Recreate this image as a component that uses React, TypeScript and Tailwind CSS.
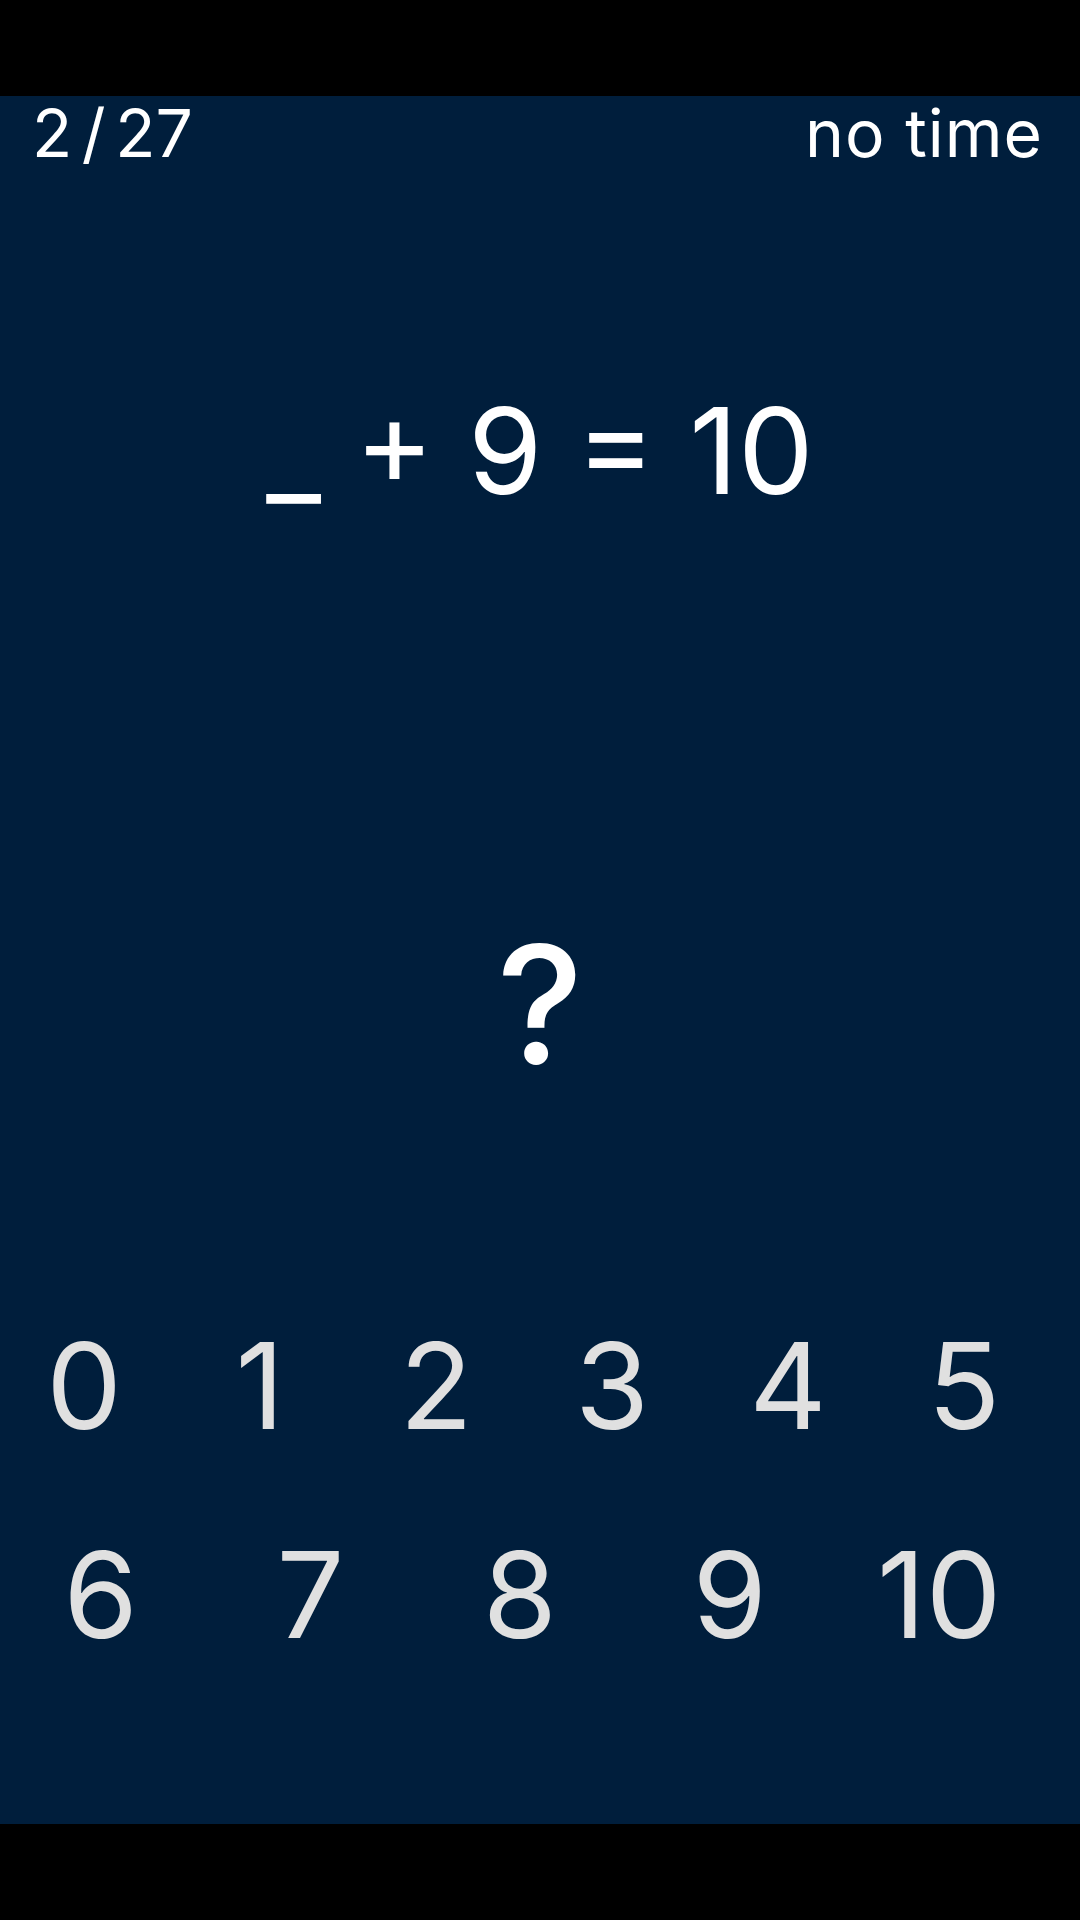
export default function App() {
  const row1 = [0, 1, 2, 3, 4, 5];
  const row2 = [6, 7, 8, 9, 10];
  return (
    <div className="w-[1080px] h-[1920px] bg-black font-['Inter',sans-serif]">
      <div className="h-[96px]" />
      <div className="h-[1728px] bg-[#001e3c] flex flex-col">
        <div className="flex justify-between pl-8 pr-[37px] pt-[4px] text-white text-[66px] leading-none">
          <span className="[word-spacing:-9px]">2 / 27</span>
          <span className="tracking-[1px]">no time</span>
        </div>
        <div className="mt-[225px] text-center text-white text-[120px] leading-none">
          _ + 9 = 10
        </div>
        <div className="mt-[412px] text-center text-white text-[164px] font-medium leading-none">
          ?
        </div>
        <div className="mt-[239px] -ml-1 grid grid-cols-6 pr-7 text-[#e0e0e0] text-[120px] leading-none">
          {row1.map((n) => (
            <button key={n} className="text-center">
              {n}
            </button>
          ))}
        </div>
        <div className="mt-[89px] -ml-1 grid grid-cols-5 pr-9 text-[#e0e0e0] text-[120px] leading-none">
          {row2.map((n) => (
            <button key={n} className="text-center">
              {n}
            </button>
          ))}
        </div>
      </div>
    </div>
  );
}
